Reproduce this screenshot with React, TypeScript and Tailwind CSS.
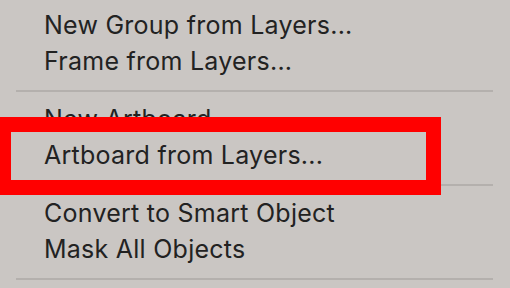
import React from "react";

const groups: string[][] = [
  ["New Group from Layers...", "Frame from Layers..."],
  ["New Artboard", "Artboard from Layers..."],
  ["Convert to Smart Object", "Mask All Objects"],
];

export default function App() {
  return (
    <div
      className="relative w-[510px] h-[288px] overflow-hidden bg-[#cac6c3] text-[#222222]"
      style={{ fontFamily: "Inter, 'Liberation Sans', sans-serif" }}
    >
      <div className="flex flex-col -mt-[2px]">
        {groups.map((g, i) => (
          <div key={i} className="flex flex-col">
            <div className="flex flex-col pt-[9px] pb-[11px]">
              {g.map((t) => (
                <div key={t} className="h-[36px] leading-[36px] text-[25px] tracking-[0.25px] pl-[44px] whitespace-nowrap">
                  {t}
                </div>
              ))}
            </div>
            <div className="ml-[16px] w-[477px] h-[2px] bg-[#b4b0ad]" />
          </div>
        ))}
      </div>
      <div className="absolute left-[-4px] top-[117px] w-[445px] h-[78px] border-[15px] border-[#ff0000]" />
    </div>
  );
}
